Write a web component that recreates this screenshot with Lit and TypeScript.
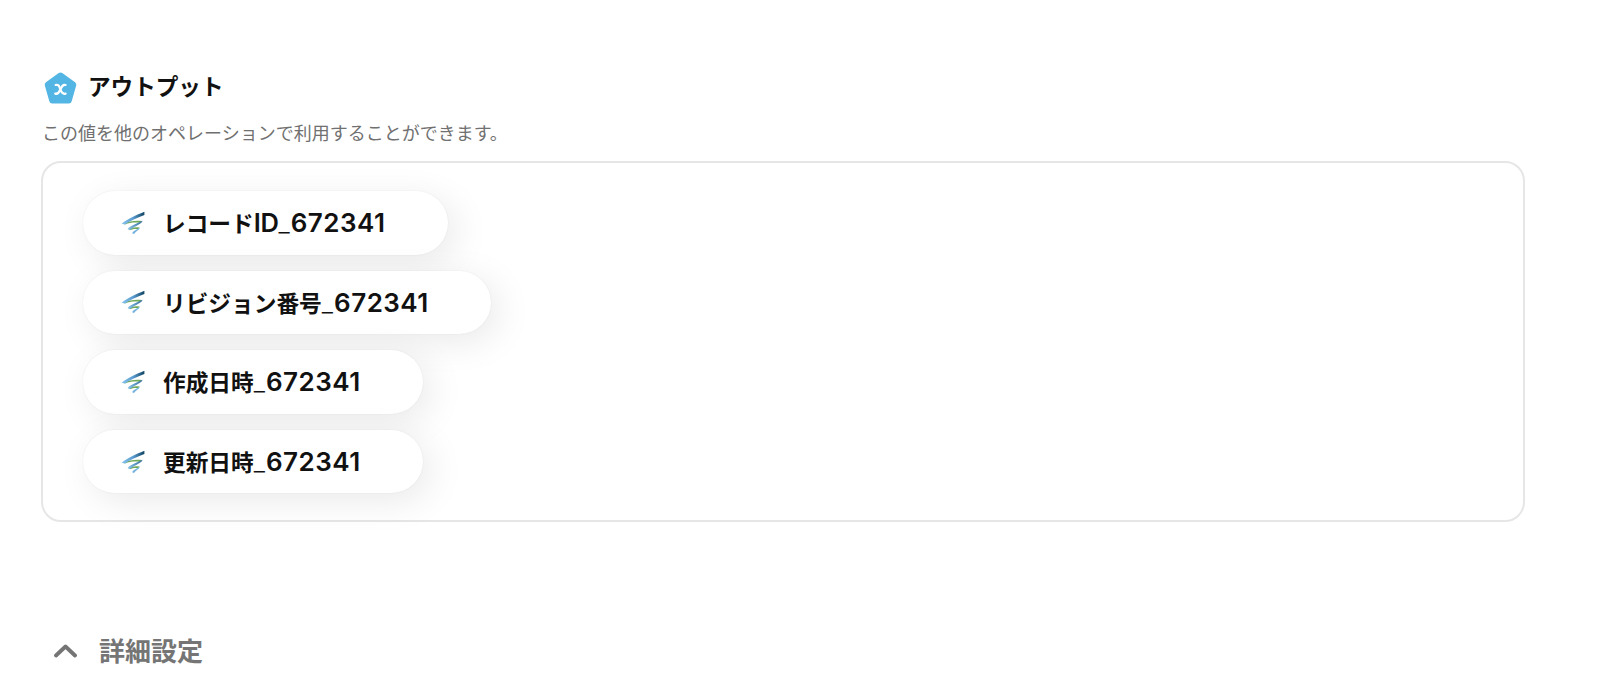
import { LitElement, css, html } from "lit";
import { customElement, property } from "lit/decorators.js";

@customElement("output-pill")
export class OutputPill extends LitElement {
  @property()
  label = "";

  @property()
  latin = "";

  @property()
  uid = "";

  render() {
    return html`
      <svg class="logo" viewBox="0 0 24 24">
        <defs>
          <linearGradient id="top" x1="0" x2="1">
            <stop offset="0" stop-color="#8ac4ee" />
            <stop offset="0.5" stop-color="#5b9ed0" />
            <stop offset="0.95" stop-color="#174b6c" />
          </linearGradient>
          <linearGradient id="mid" x1="0" x2="1">
            <stop offset="0" stop-color="#8cc5ec" />
            <stop offset="1" stop-color="#346d9c" />
          </linearGradient>
        </defs>
        <path fill="#6fa95a" d="M2.5 12.4C8 10 15 9.2 21 10L19.5 12C14 11 9 11.5 4 13.5Z" />
        <path fill="#6fa95a" d="M7.8 18.3C11 16.3 15 15.8 18.6 16.6L17 18.2C14 17.6 12 18 9 19.2Z" />
        <path fill="url(#top)" d="M23.4 .8V3.9C15.5 6.8 9.5 9.5 4 13.4L.6 12.7C6 8.2 14 4.6 23.4 .8Z" />
        <path fill="url(#mid)" d="M21.5 9.8C21.5 12.8 14.5 14.6 9 19L6.6 18.2C9 14.6 16 12.6 21.5 9.8Z" />
        <path fill="#72b1de" d="M18.8 16.4C18.4 19 15.2 19.8 13 23L11.2 22.2C12.3 19.4 16.2 18.6 18.8 16.4Z" />
      </svg>
      <span class="label">${this.label}</span
      ><span class="latin">${this.latin}</span
      ><span class="underscore">_</span
      ><span class="uid">${this.uid}</span>
    `;
  }

  static styles = css`
    :host {
      display: flex;
      align-items: baseline;
      box-sizing: border-box;
      height: 63.5px;
      padding: 0 62.5px 0 38px;
      border-radius: 32px;
      background: #fff;
      box-shadow: 8px 8px 36px rgba(0, 0, 0, 0.085), 0 0 2px rgba(0, 0, 0, 0.07);
      color: #111;
      line-height: 63.5px;
      white-space: nowrap;
    }

    .logo {
      align-self: center;
      width: 24px;
      height: 24px;
      margin-right: 18px;
    }

    .label {
      font-size: 22.7px;
      font-weight: 700;
    }

    .latin {
      font-family: Inter, sans-serif;
      font-size: 25.5px;
      font-weight: 600;
      letter-spacing: -0.4px;
    }

    .underscore {
      font-family: Inter, sans-serif;
      font-size: 25px;
      font-weight: 300;
      letter-spacing: 1px;
    }

    .uid {
      font-family: Inter, sans-serif;
      font-size: 26px;
      font-weight: 600;
      letter-spacing: 0.5px;
    }
  `;
}

@customElement("app-root")
export class AppRoot extends LitElement {
  outputs = [
    { label: "レコード", latin: "ID", uid: "672341" },
    { label: "リビジョン番号", latin: "", uid: "672341" },
    { label: "作成日時", latin: "", uid: "672341" },
    { label: "更新日時", latin: "", uid: "672341" },
  ];

  render() {
    return html`
      <header>
        <svg class="badge" viewBox="0 0 34 34">
          <path
            fill="#53b5e4"
            stroke="#53b5e4"
            stroke-width="6"
            stroke-linejoin="round"
            d="M16.5 4.5 29.3 13.7 24.8 29.5H8.2L3.7 13.7Z"
          />
          <g fill="none" stroke="#fff" stroke-width="2.2" stroke-linecap="round">
            <path d="M11.6 14C14.4 13.2 15.2 14.8 16.4 18.4S18.8 23.4 21.6 22.6" />
            <path d="M21.6 14C18.8 13.2 17.8 15.4 16.4 18.4S14 23.4 11.2 22.6" />
          </g>
        </svg>
        <h2>アウトプット</h2>
      </header>
      <p>この値を他のオペレーションで利用することができます。</p>
      <section>
        ${this.outputs.map(
          (o) => html`<output-pill .label=${o.label} .latin=${o.latin} .uid=${o.uid}></output-pill>`
        )}
      </section>
      <footer>
        <svg class="chevron" viewBox="0 0 24 16">
          <path d="M3 13.5 12.5 4.5 22 13.5" fill="none" stroke="#757575" stroke-width="3.8" stroke-linecap="round" stroke-linejoin="round" />
        </svg>
        <span>詳細設定</span>
      </footer>
    `;
  }

  static styles = css`
    :host {
      display: block;
      box-sizing: border-box;
      height: 684px;
      padding: 70px 75px 0 41px;
      overflow: hidden;
      background: #fff;
      font-family: "Noto Sans CJK JP", sans-serif;
    }

    header {
      display: flex;
      align-items: center;
      height: 34px;
      padding-left: 3px;
    }

    .badge {
      width: 34px;
      height: 34px;
      margin: 2px 10px 0 0;
    }

    h2 {
      margin: 0;
      color: #111;
      font-size: 22.6px;
      font-weight: 700;
      line-height: 32px;
      padding-bottom: 2px;
    }

    p {
      height: 30px;
      margin: 13px 0 14px 1px;
      color: #707070;
      font-size: 18px;
      line-height: 30px;
    }

    section {
      display: flex;
      flex-direction: column;
      align-items: flex-start;
      gap: 16.1px;
      box-sizing: border-box;
      height: 360.5px;
      padding: 28px 40px;
      border: 2px solid #e6e6e6;
      border-radius: 20px;
    }

    footer {
      display: flex;
      align-items: center;
      height: 40px;
      margin-top: 108.5px;
      padding-left: 12px;
      color: #757575;
      font-size: 26px;
      font-weight: 700;
      line-height: 40px;
    }

    .chevron {
      width: 24px;
      height: 16px;
      margin-right: 22px;
    }
  `;
}
